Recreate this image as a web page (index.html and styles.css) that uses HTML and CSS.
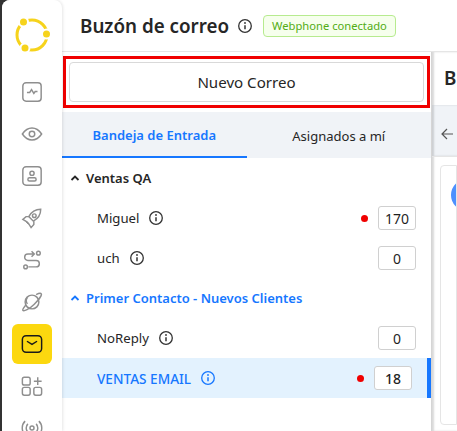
FILE: index.html
```html
<!DOCTYPE html>
<html lang="es">
<head>
    <meta charset="UTF-8">
    <title>Buzón de correo</title>
    <link rel="stylesheet" href="styles.css">
</head>
<body>
<svg class="icon-defs" width="0" height="0">
    <symbol id="info" viewBox="0 0 16 16">
        <circle cx="8" cy="8" r="6.3" fill="none" stroke="currentColor" stroke-width="1.3"/>
        <path d="M8 7.2v4" fill="none" stroke="currentColor" stroke-width="1.5"/>
        <circle cx="8" cy="5" r="0.9" fill="currentColor"/>
    </symbol>
    <symbol id="chevron" viewBox="0 0 10 10">
        <path d="M1.5 7L5 3.5 8.5 7" fill="none" stroke="currentColor" stroke-width="1.8"/>
    </symbol>
</svg>
<div class="app">
    <nav class="sidebar">
        <div class="logo">
            <svg width="36" height="36" viewBox="0 0 36 36">
                <circle cx="18" cy="18" r="15" fill="none" stroke="#f6d31c" stroke-width="3"/>
                <circle cx="9.500" cy="5" r="4.500" fill="#f6d31c" stroke="#fff" stroke-width="2"/>
                <circle cx="32.500" cy="17" r="4.500" fill="#f6d31c" stroke="#fff" stroke-width="2"/>
                <circle cx="11" cy="31" r="4.500" fill="#f6d31c" stroke="#fff" stroke-width="2"/>
            </svg>
        </div>
        <div class="nav-item">
            <svg viewBox="0 0 24 24"><rect x="2" y="2" width="20" height="20" rx="3.500"/><path d="M6.500 12.500h3l2-3 2.500 4 1.500-2h2.500"/></svg>
        </div>
        <div class="nav-item">
            <svg viewBox="0 0 24 24"><path d="M1.500 12c3-4.500 6.500-6.500 10.500-6.500s7.500 2 10.500 6.500c-3 4.500-6.500 6.500-10.500 6.500S4.500 16.500 1.500 12z"/><circle cx="12" cy="12" r="3"/></svg>
        </div>
        <div class="nav-item">
            <svg viewBox="0 0 24 24"><rect x="2" y="2" width="20" height="20" rx="3.500"/><circle cx="12" cy="9" r="2.300"/><rect x="7.500" y="14" width="9" height="3.500" rx="1.700"/></svg>
        </div>
        <div class="nav-item">
            <svg viewBox="0 0 24 24"><path d="M21.500 2.500c-5.500 0-10 2.500-13 8l5 5c5.500-3 8-7.500 8-13z"/><circle cx="14.500" cy="9.500" r="2"/><path d="M8.500 10.500H5.500L2 13.500l4 2.500 2.500 2.500 2.500 4 3-3.500v-3.500"/><path d="M6 16l2.500 2.500"/></svg>
        </div>
        <div class="nav-item">
            <svg viewBox="0 0 24 24"><circle cx="19" cy="4.500" r="2"/><circle cx="5" cy="19.500" r="2"/><path d="M8 19.500h8.500a3.500 3.500 0 0 0 0-7h-9a3.500 3.500 0 0 1 0-7H14M11.500 2.500l3 3-3 3"/></svg>
        </div>
        <div class="nav-item">
            <svg viewBox="0 0 24 24"><circle cx="12" cy="12" r="7.500"/><path d="M7 7c-1.500 2-1.500 5 0 7M5.500 15c-2.500 3-4 5-3.500 6 1 1.500 7-1 12.500-6.500S23 4 22 3c-.6-.8-3-.3-5.500 1"/></svg>
        </div>
        <div class="nav-item active">
            <svg viewBox="0 0 24 24"><rect x="1.500" y="3" width="21" height="18" rx="4"/><path d="M6.500 9l5.500 3.500L17.500 9"/></svg>
        </div>
        <div class="nav-item">
            <svg viewBox="0 0 24 24"><rect x="1.500" y="2.500" width="8.500" height="8.500" rx="2"/><rect x="1.500" y="13.500" width="8.500" height="8.500" rx="2"/><rect x="14" y="13.500" width="8.500" height="8.500" rx="2"/><path d="M18.250 2.500v8.500M14 6.750h8.500"/></svg>
        </div>
        <div class="nav-item">
            <svg viewBox="0 0 24 24"><circle cx="12" cy="12" r="2.200"/><path d="M7.500 16.500a6.500 6.500 0 0 1 0-9M16.500 7.500a6.500 6.500 0 0 1 0 9M4.500 19.500a10.500 10.500 0 0 1 0-15M19.500 4.500a10.500 10.500 0 0 1 0 15"/></svg>
        </div>
    </nav>
    <main class="content">
        <header class="page-header">
            <h1>Buzón de correo</h1>
            <svg class="info header-info"><use href="#info"/></svg>
            <span class="status-tag">Webphone conectado</span>
        </header>
        <div class="columns">
            <section class="mail-panel">
                <div class="new-mail-box">
                    <button class="new-mail">Nuevo Correo</button>
                </div>
                <div class="tabs">
                    <div class="tab selected">Bandeja de Entrada</div>
                    <div class="tab">Asignados a mí</div>
                </div>
                <div class="group-title">
                    <svg class="chevron"><use href="#chevron"/></svg>Ventas QA
                </div>
                <div class="row">
                    <span class="row-name">Miguel</span>
                    <svg class="info"><use href="#info"/></svg>
                    <span class="dot"></span>
                    <span class="count">170</span>
                </div>
                <div class="row">
                    <span class="row-name">uch</span>
                    <svg class="info"><use href="#info"/></svg>
                    <span class="count no-dot">0</span>
                </div>
                <div class="group-title blue">
                    <svg class="chevron"><use href="#chevron"/></svg>Primer Contacto - Nuevos Clientes
                </div>
                <div class="row">
                    <span class="row-name">NoReply</span>
                    <svg class="info"><use href="#info"/></svg>
                    <span class="count no-dot">0</span>
                </div>
                <div class="row current">
                    <span class="row-name">VENTAS EMAIL</span>
                    <svg class="info"><use href="#info"/></svg>
                    <span class="dot"></span>
                    <span class="count">18</span>
                </div>
            </section>
            <section class="detail-panel">
                <div class="detail-title">B</div>
                <div class="detail-bar">
                    <svg width="14" height="14" viewBox="0 0 14 14"><path d="M13 7H2M7 2L2 7l5 5" fill="none" stroke="#555" stroke-width="1.200"/></svg>
                </div>
                <div class="detail-body">
                    <div class="detail-card"><span class="avatar"></span></div>
                </div>
            </section>
        </div>
    </main>
</div>
</body>
</html>
```

FILE: styles.css
```css
* {
    margin: 0;
    padding: 0;
    box-sizing: border-box;
}

body {
    width: 457px;
    height: 431px;
    overflow: hidden;
    background-color: #333;
    font-family: 'Noto Sans', 'Open Sans', sans-serif;
    color: #262626;
}

.icon-defs {
    display: block;
    height: 0;
}

.app {
    display: flex;
    height: 431px;
    margin-left: 2px;
    background-color: #fff;
    border-radius: 8px 0 0 0;
}

.sidebar {
    width: 60px;
    flex-shrink: 0;
    display: flex;
    flex-direction: column;
    align-items: center;
    overflow: hidden;
    background-color: #fff;
    border-radius: 8px 8px 0 0;
    box-shadow: 1px 0 3px rgba(0, 0, 0, 0.1);
    position: relative;
}

.logo {
    height: 72px;
    flex-shrink: 0;
    padding-top: 17px;
}

.nav-item {
    width: 40px;
    height: 40px;
    flex-shrink: 0;
    margin-bottom: 2px;
    display: flex;
    align-items: center;
    justify-content: center;
    border-radius: 6px;
    color: #8f8f8f;
}

.nav-item svg {
    width: 22px;
    height: 22px;
    fill: none;
    stroke: currentColor;
    stroke-width: 1.600;
}

.nav-item.active {
    background-color: #fcd80f;
    color: #1a1a1a;
}

.content {
    flex: 1;
    min-width: 0;
}

.page-header {
    height: 52px;
    display: flex;
    align-items: center;
    padding-left: 18px;
    border-bottom: 1px solid #e5e5e5;
}

h1 {
    font-size: 18.800px;
    font-weight: 600;
    margin-right: 8px;
}

.info {
    width: 16px;
    height: 16px;
    flex-shrink: 0;
    color: #333;
}

.header-info {
    margin-right: 10px;
}

.status-tag {
    height: 22px;
    padding: 0 8px;
    font-size: 11.200px;
    line-height: 20px;
    color: #52ad14;
    background-color: #f6ffed;
    border: 1px solid #b7eb8f;
    border-radius: 4px;
}

.columns {
    display: flex;
}

.mail-panel {
    width: 369px;
    height: 379px;
    flex-shrink: 0;
    background-color: #fff;
}

.new-mail-box {
    height: 52px;
    margin: 4px 1px 0 1px;
    padding: 3px;
    border: 3px solid #f00000;
}

.new-mail {
    width: 100%;
    height: 40px;
    font: inherit;
    font-size: 15.100px;
    color: #262626;
    background-color: #fff;
    border: 1px solid #d9d9d9;
    border-radius: 4px;
}

.tabs {
    display: flex;
    height: 46px;
    margin-top: 4px;
    background-color: #f0f3f7;
}

.tab {
    flex: 1;
    display: flex;
    align-items: center;
    justify-content: center;
    font-size: 13px;
    padding-top: 1px;
}

.tab.selected {
    color: #1677ff;
    font-weight: 600;
    border-bottom: 2px solid #1677ff;
}

.group-title {
    height: 40px;
    display: flex;
    align-items: center;
    padding-left: 8px;
    font-size: 13px;
    font-weight: 600;
}

.group-title.blue {
    color: #1677ff;
}

.chevron {
    width: 10px;
    height: 10px;
    margin-right: 6px;
}

.row {
    height: 40px;
    display: flex;
    align-items: center;
    padding-left: 35px;
    padding-right: 15px;
    font-size: 13.200px;
}

.row .info {
    margin-left: 9px;
}

.dot {
    width: 7px;
    height: 7px;
    margin-left: auto;
    margin-right: 10px;
    background-color: #f00000;
    border-radius: 50%;
}

.count {
    width: 38px;
    height: 24px;
    display: flex;
    align-items: center;
    justify-content: center;
    font-size: 14px;
    color: #1f1f1f;
    background-color: #fff;
    border: 1px solid #d0d0d0;
    border-radius: 3px;
}

.count.no-dot {
    margin-left: auto;
}

.row.current {
    color: #1677ff;
    font-size: 13.600px;
    font-weight: 500;
    background-color: #e3f2fe;
    border-right: 4px solid #1677ff;
}

.row.current .info {
    color: #1677ff;
}

.detail-panel {
    flex: 1;
    min-width: 0;
    overflow: hidden;
    background-color: #fff;
    border-left: 1px solid #d5d5d5;
    box-shadow: inset 2px 0 2px rgba(0, 0, 0, 0.15);
}

.detail-title {
    height: 53px;
    padding: 13px 0 0 12px;
    font-size: 18.800px;
    font-weight: 600;
}

.detail-bar {
    height: 52px;
    padding: 19px 0 0 8px;
    background-color: #f0f3f7;
    border-bottom: 1px solid #e5e5e5;
    box-shadow: inset 2px 0 2px rgba(0, 0, 0, 0.15);
}

.detail-body {
    padding-left: 8px;
}

.detail-card {
    height: 260px;
    padding: 13px 0 0 10px;
    margin-top: 8px;
    border: 1px solid #e5e5e5;
    border-radius: 4px 0 0 4px;
    overflow: hidden;
}

.avatar {
    display: block;
    width: 32px;
    height: 32px;
    background-color: #4d90fe;
    border-radius: 50%;
}
```
